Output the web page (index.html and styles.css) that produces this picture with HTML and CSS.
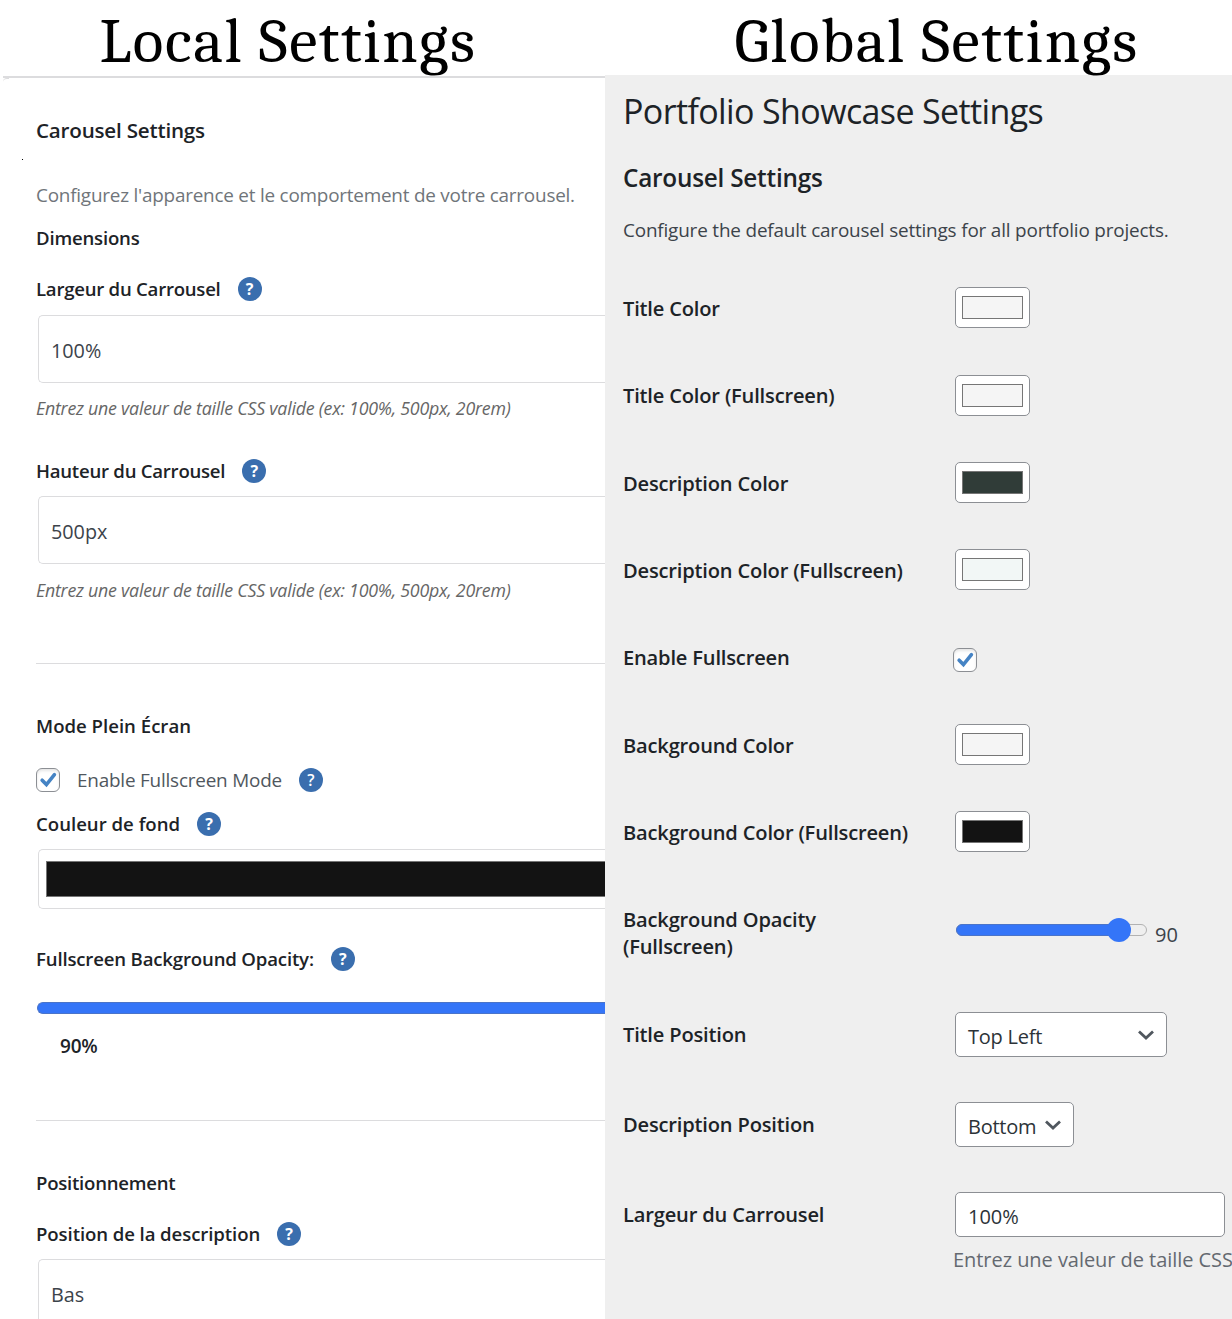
FILE: index.html
```html
<!DOCTYPE html>
<html lang="fr">
<head>
<meta charset="utf-8">
<title>Carousel Settings</title>
<link rel="stylesheet" href="styles.css">
</head>
<body>
<svg class="defs" width="0" height="0">
  <symbol id="check" viewBox="0 0 24 24"><path d="M5.6 12.2 10.3 17 19 6.2" fill="none" stroke="#4583c4" stroke-width="3.9" stroke-linecap="round"/></symbol>
  <symbol id="chevron" viewBox="0 0 16 10"><path d="M1 1.5 8 8 15 1.5" fill="none" stroke="#50575e" stroke-width="2.8"/></symbol>
</svg>
<div class="page">
  <section class="local">
    <div class="banner"><span class="t-local">Local Settings</span></div>
    <div class="panel">
      <i class="corner"></i><i class="speck"></i>
      <h3 class="line title mt39">Carousel Settings</h3>
      <p class="line intro mt39">Configurez l'apparence et le comportement de votre carrousel.</p>
      <h4 class="line mt17">Dimensions</h4>
      <div class="line snug mt25"><b>Largeur du Carrousel</b><span class="help">?</span></div>
      <div class="field mt13">100%</div>
      <p class="line hint mt12">Entrez une valeur de taille CSS valide (ex: 100%, 500px, 20rem)</p>
      <div class="line snug mt37"><b>Hauteur du Carrousel</b><span class="help">?</span></div>
      <div class="field mt12">500px</div>
      <p class="line hint raised mt13">Entrez une valeur de taille CSS valide (ex: 100%, 500px, 20rem)</p>
      <div class="rule mt60"></div>
      <h4 class="line loose mt49">Mode Plein Écran</h4>
      <div class="line mt28"><span class="box"><svg><use href="#check"/></svg></span><span class="opt">Enable Fullscreen Mode</span><span class="help light">?</span></div>
      <div class="line loose mt18"><b>Couleur de fond</b><span class="help">?</span></div>
      <div class="field color mt12"><div class="fill"></div></div>
      <div class="line opacity mt37"><b>Fullscreen Background Opacity:</b><span class="help">?</span></div>
      <div class="bar"></div>
      <div class="line pct">90%</div>
      <div class="rule mt61"></div>
      <h4 class="line snug mt49">Positionnement</h4>
      <div class="line position mt25"><b>Position de la description</b><span class="help">?</span></div>
      <div class="field mt12">Bas</div>
    </div>
  </section>
  <section class="global">
    <div class="banner"><span class="t-global">Global Settings</span></div>
    <div class="admin">
      <h1>Portfolio Showcase Settings</h1>
      <h2>Carousel Settings</h2>
      <p class="lead">Configure the default carousel settings for all portfolio projects.</p>
      <div class="row"><label>Title Color</label><div class="swatch"><i class="pale"></i></div></div>
      <div class="row"><label>Title Color (Fullscreen)</label><div class="swatch"><i class="pale"></i></div></div>
      <div class="row"><label>Description Color</label><div class="swatch"><i class="green"></i></div></div>
      <div class="row"><label>Description Color (Fullscreen)</label><div class="swatch"><i class="mint"></i></div></div>
      <div class="row"><label>Enable Fullscreen</label><span class="box"><svg><use href="#check"/></svg></span></div>
      <div class="row"><label>Background Color</label><div class="swatch"><i class="pale"></i></div></div>
      <div class="row"><label>Background Color (Fullscreen)</label><div class="swatch"><i class="black"></i></div></div>
      <div class="row tall"><label>Background Opacity<br>(Fullscreen)</label><div class="slider"><div class="track"><div class="done"></div><div class="thumb"></div></div><span>90</span></div></div>
      <div class="row mid"><label>Title Position</label><div class="select wide">Top Left<svg><use href="#chevron"/></svg></div></div>
      <div class="row mid"><label>Description Position</label><div class="select narrow">Bottom<svg><use href="#chevron"/></svg></div></div>
      <div class="row mid"><label>Largeur du Carrousel</label><div class="select input">100%</div></div>
      <p class="note">Entrez une valeur de taille CSS</p>
    </div>
  </section>
</div>
</body>
</html>
```
FILE: styles.css
```css
* { box-sizing: border-box; }
body { margin: 0; background: #fff; font-family: "Segoe UI", "Open Sans", "Noto Sans", sans-serif; color: #1d2327; }
h1, h2, h3, h4, p { margin: 0; }
.defs { display: block; position: absolute; }
.page { display: grid; grid-template-columns: 605px 627px; width: 1232px; height: 1319px; overflow: hidden; }
.local, .global { height: 1319px; overflow: hidden; }
.banner { height: 75px; white-space: nowrap; font-family: Cambria, "Liberation Serif", serif; font-size: 63.5px; line-height: 84px; letter-spacing: 1.55px; color: #000; position: relative; z-index: 1; }
.t-local { margin-left: 99.5px; }
.t-global { margin-left: 129.5px; }

.panel { position: relative; margin: 1px 0 0 3px; border-top: 2px solid #dcdcde; padding-left: 33px; height: 1243px; }
.corner { position: absolute; left: 0; top: 0; width: 6px; height: 4px; border-top: 1px solid #dcdcde; border-top-left-radius: 6px; }
.speck { position: absolute; left: 19px; top: 81px; width: 1px; height: 1px; background: #000; }
.line { display: flex; align-items: center; height: 26px; line-height: 26px; font-size: 18.6px; letter-spacing: -0.2px; font-weight: 600; white-space: nowrap; }
.line b { font-weight: 600; }
.title { font-size: 20.6px; }
.snug { letter-spacing: -0.25px; }
.loose { letter-spacing: 0; }
.opacity { letter-spacing: -0.17px; }
.position { letter-spacing: -0.09px; }
.intro { font-weight: 400; color: #70757a; font-size: 18.9px; letter-spacing: -0.22px; }
.hint { font-weight: 400; font-style: italic; color: #666; font-size: 17.8px; letter-spacing: -0.23px; }
.raised { line-height: 24px; padding-bottom: 1px; }
.help { width: 24px; height: 24px; margin-left: 17px; border-radius: 50%; background: #3a6eae; color: #fff; font-size: 16px; letter-spacing: 0; font-weight: 700; line-height: 24px; text-align: center; }
.help.light { font-weight: 600; }
.field { height: 68px; margin-left: 2px; padding-left: 12px; border: 1px solid #dcdcde; border-right: 0; border-radius: 5px 0 0 5px; font-size: 19.8px; line-height: 69px; color: #3c434a; }
.color { height: 60px; padding: 11px 0 0 7px; }
.fill { height: 36px; background: #131313; border: 1px solid #767676; border-right: 0; }
.rule { height: 1px; background: #dcdcde; }
.box { display: flex; width: 24px; height: 24px; border: 1px solid #8c8f94; border-radius: 6px; background: #fff; box-shadow: inset 0 2px 3px rgba(0,0,0,.1); }
.box svg { width: 22px; height: 22px; }
.row .box { margin-top: 5px; }
.opt { margin-left: 17px; font-size: 18.9px; font-weight: 400; color: #50575e; }
.bar { height: 12px; margin: 30px 0 0 1px; border: 1px solid #4a74c9; border-width: 1px 0 1px 1px; border-radius: 6px 0 0 6px; background: #3475f8; }
.pct { margin-top: 19px; padding-left: 24px; font-size: 19px; }
.mt12 { margin-top: 12px; }
.mt13 { margin-top: 13px; }
.mt17 { margin-top: 17px; }
.mt18 { margin-top: 18px; }
.mt25 { margin-top: 25px; }
.mt28 { margin-top: 28px; }
.mt37 { margin-top: 37px; }
.mt39 { margin-top: 39px; }
.mt49 { margin-top: 49px; }
.mt60 { margin-top: 60px; }
.mt61 { margin-top: 61px; }

.admin { height: 1244px; padding-left: 18px; background: #efefef; white-space: nowrap; }
h1 { padding-top: 13px; height: 83px; font-size: 34px; letter-spacing: -0.62px; line-height: 46px; font-weight: 400; }
h2 { height: 52px; font-size: 24.3px; letter-spacing: -0.22px; line-height: 40px; font-weight: 600; }
.lead { height: 54.2px; font-size: 18.9px; letter-spacing: -0.17px; line-height: 40px; color: #3c434a; }
.row { display: grid; grid-template-columns: 330px 1fr; align-items: center; height: 87.3px; }
.row.tall { height: 114.7px; }
.row.mid { height: 90px; }
label { padding-top: 1.4px; font-size: 20.1px; letter-spacing: -0.18px; line-height: 27px; font-weight: 600; }
.tall label, .mid label { padding-top: 0; }
.swatch { width: 75px; height: 41px; margin-left: 2px; padding: 8px 6px; border: 1px solid #8c8f94; border-radius: 5px; background: #fff; }
.swatch i { display: block; width: 61px; height: 23px; border: 1px solid #767676; }
.pale { background: #f5f5f5; }
.green { background: #303c38; }
.mint { background: #f2f7f6; }
.black { background: #131313; }
.slider { display: flex; align-items: center; height: 40px; margin: 0 0 6px 3px; font-size: 20px; color: #3c434a; }
.track { position: relative; width: 191px; height: 12px; border: 1px solid #b2b2b2; border-radius: 6px; }
.done { width: 165px; height: 12px; margin: -1px; border: 1px solid #4a74c9; border-radius: 6px; background: #3475f8; }
.thumb { position: absolute; left: 150px; top: -7px; width: 24px; height: 24px; border-radius: 50%; background: #3475f8; }
.slider span { margin: 9px 0 0 8px; }
.select { display: flex; align-items: center; justify-content: space-between; height: 45px; margin-left: 2px; padding: 4px 12px 0 12px; border: 1px solid #8c8f94; border-radius: 5px; background: #fff; font-size: 20px; letter-spacing: -0.25px; color: #2c3338; }
.select svg { width: 16px; height: 10px; margin-top: -4px; }
.wide { width: 212px; }
.narrow { width: 119px; }
.input { width: 270px; letter-spacing: 0; }
.note { margin: -13px 0 0 330px; font-size: 20px; letter-spacing: -0.05px; line-height: 26px; color: #646970; }
```
